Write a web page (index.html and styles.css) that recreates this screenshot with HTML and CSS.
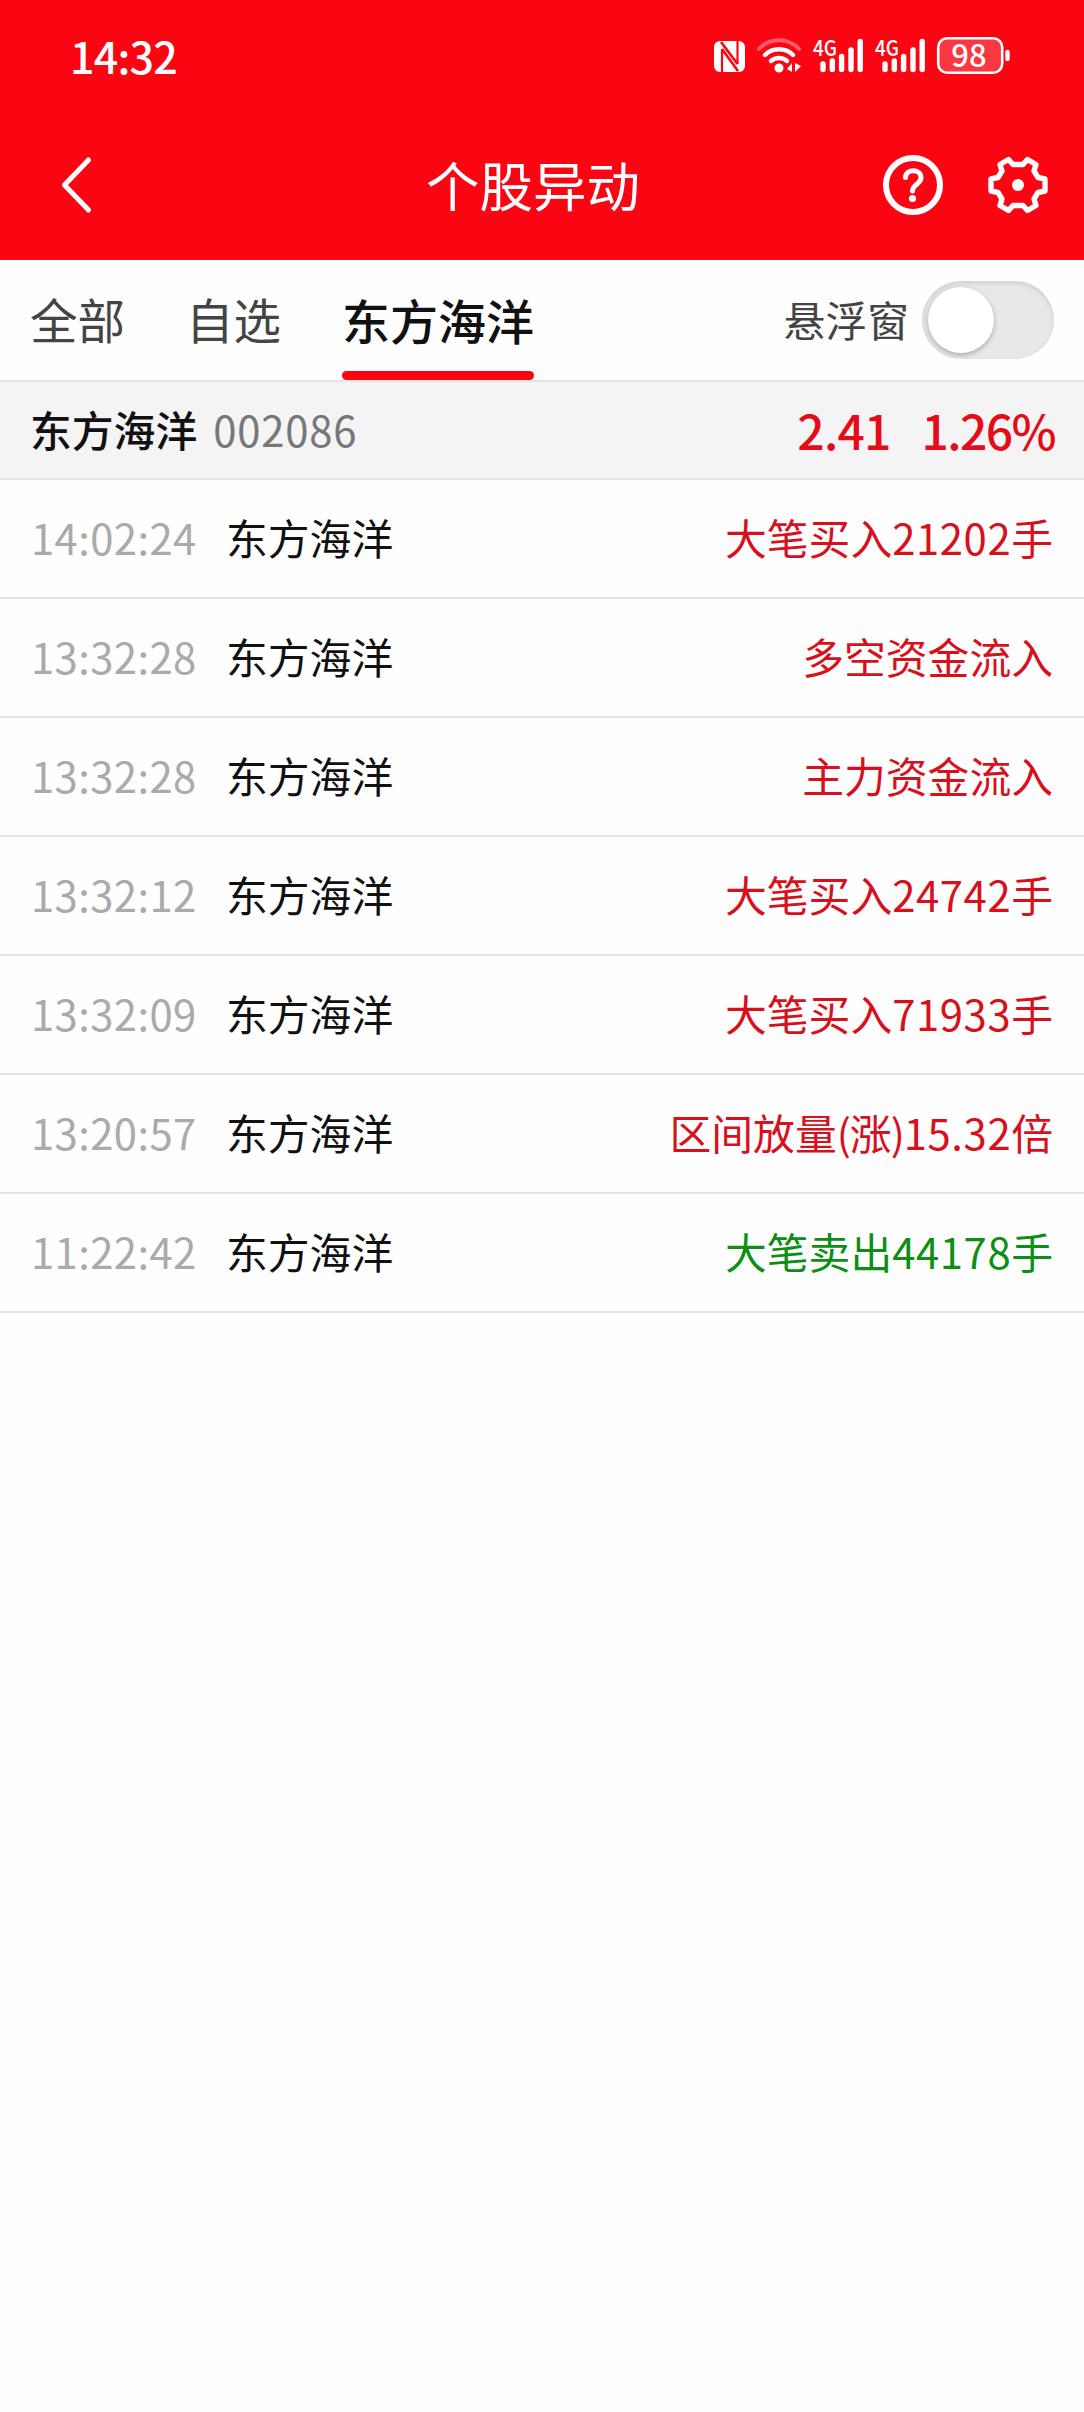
FILE: index.html
```
<!DOCTYPE html>
<html lang="zh-CN">
<head>
<meta charset="utf-8">
<title>个股异动</title>
<link rel="stylesheet" href="styles.css">
</head>
<body>
<header class="top">
  <div class="status">
    <span class="clock">14:32</span>
    <svg class="status-icons" width="310" height="50" viewBox="700 30 310 50" fill="none" stroke="#fff" stroke-linecap="round">
      <rect x="714" y="41" width="31" height="31" rx="6" fill="#fff" stroke="none"/>
      <path d="M722 72V49M737.500 41V64" stroke="#fb0512" stroke-width="2.200" stroke-linecap="butt"/>
      <path d="M721 42L737.500 64M722 49L738 71" stroke="#fb0512" stroke-width="2.600" stroke-linecap="butt"/>
      <path d="M759 49A27 27 0 0 1 799 49" stroke-width="4" opacity=".35"/>
      <path d="M765 55A20 20 0 0 1 793 55" stroke-width="4.400"/>
      <path d="M771 61A12 12 0 0 1 787 61" stroke-width="4.400"/>
      <circle cx="779" cy="68" r="4.500" fill="#fff" stroke="none"/>
      <path d="M787 69L792 63V72ZM795 63V72L801 66Z" fill="#fff" stroke="none"/>
      <g stroke-width="5.400">
        <path d="M823 64V69.500M832.300 61V69.500M841.600 56.500V69.500M851 50V69.500M860.200 41.500V69.500"/>
        <path d="M885 64V69.500M894.300 61V69.500M903.600 56.500V69.500M913 50V69.500M922.200 41.500V69.500"/>
      </g>
      <g class="net" fill="#fff" stroke="none">
        <text x="813" y="55.500" textLength="24" lengthAdjust="spacingAndGlyphs">4G</text>
        <text x="875" y="55.500" textLength="24" lengthAdjust="spacingAndGlyphs">4G</text>
      </g>
      <rect x="938.200" y="38.200" width="64" height="34.600" rx="9" fill="#fff" fill-opacity=".2" stroke-width="2.600"/>
      <path d="M1007.500 52V59" stroke-width="4.400"/>
      <text class="level" x="969" y="66.500" text-anchor="middle" fill="#fff" stroke="none">98</text>
    </svg>
  </div>
  <div class="nav">
    <svg class="back" width="60" height="60" viewBox="46 155 60 60" fill="none" stroke="#fff" stroke-width="5" stroke-linecap="round" stroke-linejoin="round"><path d="M88.500 160L64.500 185L88.500 210"/></svg>
    <h1 class="title">个股异动</h1>
    <svg class="actions" width="170" height="64" viewBox="880 153 170 64" fill="none" stroke="#fff">
      <circle cx="913" cy="185" r="27" stroke-width="6"/>
      <path d="M905.500 177.500C905.500 168.500 921 168.500 921 177.500C921 184.500 912.500 184 912.500 191" stroke-width="5" stroke-linecap="round"/>
      <circle cx="912.500" cy="198.500" r="3.600" fill="#fff" stroke="none"/>
      <path d="M1008.500 159.500L1013 164.500H1023L1027.500 159.500L1036 164.500L1034 171L1038 177.500L1045 179V191L1038 192.500L1034 199L1036 205.500L1027.500 210.500L1023 205.500H1013L1008.500 210.500L1000 205.500L1002 199L998 192.500L991 191V179L998 177.500L1002 171L1000 164.500Z" stroke-width="5.400" stroke-linejoin="round"/>
      <circle cx="1018" cy="185" r="6" fill="#fff" stroke="none"/>
    </svg>
  </div>
</header>
<nav class="tabs">
  <span class="tab">全部</span>
  <span class="tab">自选</span>
  <span class="tab active">东方海洋</span>
  <span class="float-label">悬浮窗</span>
  <span class="switch"><span class="knob"></span></span>
</nav>
<section class="summary">
  <span class="stock">东方海洋</span>
  <span class="code">002086</span>
  <span class="price">2.41</span>
  <span class="change">1.26%</span>
</section>
<ul class="list">
  <li class="row"><span class="time">14:02:24</span><span class="name">东方海洋</span><span class="event">大笔买入<span class="num">21202</span>手</span></li>
  <li class="row"><span class="time">13:32:28</span><span class="name">东方海洋</span><span class="event">多空资金流入</span></li>
  <li class="row"><span class="time">13:32:28</span><span class="name">东方海洋</span><span class="event">主力资金流入</span></li>
  <li class="row"><span class="time">13:32:12</span><span class="name">东方海洋</span><span class="event">大笔买入<span class="num">24742</span>手</span></li>
  <li class="row"><span class="time">13:32:09</span><span class="name">东方海洋</span><span class="event">大笔买入<span class="num">71933</span>手</span></li>
  <li class="row"><span class="time">13:20:57</span><span class="name">东方海洋</span><span class="event">区间放量<span class="tight">(涨)</span><span class="num">15.32</span>倍</span></li>
  <li class="row"><span class="time">11:22:42</span><span class="name">东方海洋</span><span class="event sell">大笔卖出<span class="num">44178</span>手</span></li>
</ul>
</body>
</html>
```
FILE: styles.css
```
* { box-sizing: border-box; }
body {
  margin: 0;
  min-height: 2412px;
  background: #fefefe;
  color: #111;
  font-family: "Noto Sans CJK SC", sans-serif;
  font-size: 41.8px;
  line-height: 60px;
  white-space: nowrap;
}
.top { height: 260px; background: #fb0512; color: #fff; }
.status { height: 110px; padding: 30px 74px 0 70px; display: flex; justify-content: space-between; }
.clock { font-size: 43px; font-weight: 500; line-height: 50px; letter-spacing: -.8px; }
.net { font-size: 22px; font-weight: 500; }
.level { font-size: 31px; font-weight: 500; }
.nav { height: 150px; padding: 0 34px 0 46px; display: flex; align-items: center; }
.title { margin: 0 0 0 320px; padding-bottom: 2px; font-size: 53.5px; font-weight: 400; }
.actions { margin-left: auto; }
.tabs { height: 120px; padding: 0 30px 0 30px; display: flex; align-items: center; color: #444; font-size: 47.5px; }
.tab { height: 120px; margin-right: 61px; line-height: 118px; }
.tab.active { position: relative; font-size: 48px; font-weight: 500; color: #111; }
.tab.active::after { content: ""; position: absolute; left: 0; right: 0; bottom: 0; height: 9px; border-radius: 4.5px; background: #fb0512; }
.float-label { margin-left: auto; padding-bottom: 2px; font-size: 41.8px; }
.switch { width: 132px; height: 78px; margin-left: 13px; padding: 6px; border-radius: 39px; background: #e8e8e8; box-shadow: inset 0 2px 5px rgba(0,0,0,.12); }
.knob { display: block; width: 66px; height: 66px; border-radius: 50%; background: #fff; box-shadow: 0 2px 5px rgba(0,0,0,.28); }
.summary { height: 100px; padding: 0 29px 3px 30px; display: flex; align-items: center; background: #f4f4f4; border-top: 2px solid #e5e5e5; border-bottom: 2px solid #e5e5e5; }
.stock { font-weight: 500; }
.code { margin-left: 16px; color: #777; letter-spacing: .8px; }
.price, .change { color: #e60b18; font-size: 48px; font-weight: 500; }
.price { margin-left: auto; letter-spacing: -.8px; }
.change { margin-left: 31px; letter-spacing: -1.6px; }
.list { margin: 0; padding: 0; list-style: none; }
.row { height: 119px; padding: 0 31px 3px; display: flex; align-items: center; border-bottom: 2px solid #e5e5e5; }
.time { width: 195px; color: #aaa; letter-spacing: .4px; }
.event { margin-left: auto; color: #d7101c; }
.num { letter-spacing: .6px; }
.tight { letter-spacing: -1px; }
.sell { color: #0c8f14; }
```
